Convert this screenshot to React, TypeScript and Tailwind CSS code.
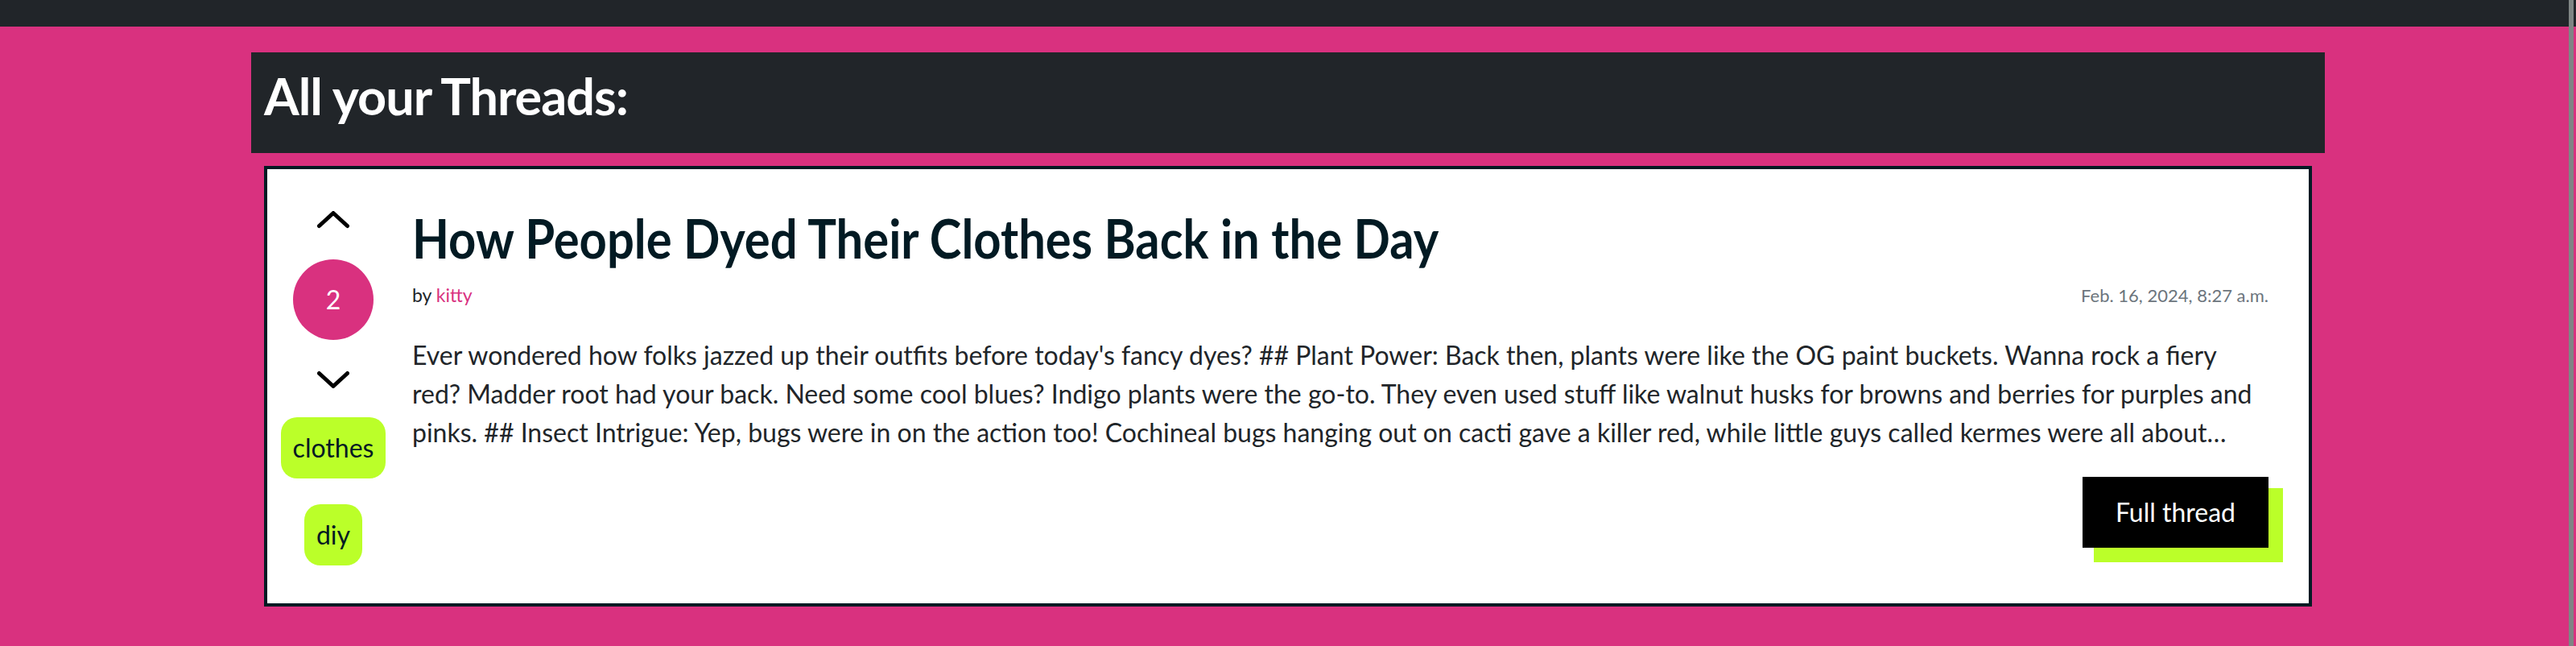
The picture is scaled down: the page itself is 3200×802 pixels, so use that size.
import React from "react";

const lines = [
  "Ever wondered how folks jazzed up their outfits before today's fancy dyes? ## Plant Power: Back then, plants were like the OG paint buckets. Wanna rock a fiery",
  "red? Madder root had your back. Need some cool blues? Indigo plants were the go-to. They even used stuff like walnut husks for browns and berries for purples and",
  "pinks. ## Insect Intrigue: Yep, bugs were in on the action too! Cochineal bugs hanging out on cacti gave a killer red, while little guys called kermes were all about…",
];

function ChevronUp() {
  return (
    <svg width="40" height="22" viewBox="0 0 40 22" fill="none">
      <path d="M2.5 18.5 L20 2.5 L37.5 18.5" stroke="#000" strokeWidth="5" strokeLinecap="round" strokeLinejoin="round" />
    </svg>
  );
}

function ChevronDown() {
  return (
    <svg width="40" height="22" viewBox="0 0 40 22" fill="none">
      <path d="M2.5 3.5 L20 19.5 L37.5 3.5" stroke="#000" strokeWidth="5" strokeLinecap="round" strokeLinejoin="round" />
    </svg>
  );
}

export default function App() {
  return (
    <div className="relative min-h-[802px] bg-[#d9317f] font-['Lato','Noto_Sans',sans-serif] text-[#212529]">
      <div className="h-[33px] bg-[#212529]" />
      <div className="mx-auto mt-[32px] w-[2576px]">
        <div className="h-[125px] bg-[#212529] pl-[16px] pt-[16px]">
          <h1 className="text-[63px] font-bold leading-[1.2] tracking-[-1px] text-white">
            All your Threads:
          </h1>
        </div>
        <div className="mx-[16px] mt-[16px] flex border-[4px] border-[#021a23] bg-white pl-[16px] pr-[50px]">
          <div className="flex w-[132px] shrink-0 flex-col items-center pt-[52px]">
            <ChevronUp />
            <div className="mt-[38px] flex h-[100px] w-[100px] items-center justify-center rounded-full bg-[#d9317f] text-[32px] text-white">
              2
            </div>
            <div className="mt-[38px]">
              <ChevronDown />
            </div>
            <div className="mt-[36px] flex h-[76px] items-center rounded-[20px] bg-[#bbff29] px-[15px] text-[32px] text-[#021a23]">
              clothes
            </div>
            <div className="mt-[32px] flex h-[76px] items-center rounded-[20px] bg-[#bbff29] px-[15px] text-[32px] text-[#021a23]">
              diy
            </div>
          </div>
          <div className="ml-[32px] min-w-0 flex-1 pt-[46px] pb-[69px]">
            <h2 className="inline-block origin-left scale-x-[0.905] whitespace-nowrap text-[66px] font-bold leading-[1.2] text-[#021a23]">
              How People Dyed Their Clothes Back in the Day
            </h2>
            <div className="mt-[13px] flex items-baseline justify-between leading-[36px]">
              <span className="text-[23px]">
                by <span className="text-[#d9317f]">kitty</span>
              </span>
              <span className="text-[22px] text-[#6c757d]">Feb. 16, 2024, 8:27 a.m.</span>
            </div>
            <div className="mt-[32px] text-[32px] leading-[48px]">
              {lines.map((l, i) => (
                <div key={i} className="whitespace-nowrap">
                  {l}
                </div>
              ))}
            </div>
            <div className="mt-[31px] flex justify-end">
              <button className="h-[88px] bg-black px-[41px] text-[32px] text-white shadow-[16px_16px_0_2px_#bbff29]">
                Full thread
              </button>
            </div>
          </div>
        </div>
      </div>
      <div className="absolute right-[3px] top-0 h-full w-[6px] bg-[#7f8584]" />
    </div>
  );
}
